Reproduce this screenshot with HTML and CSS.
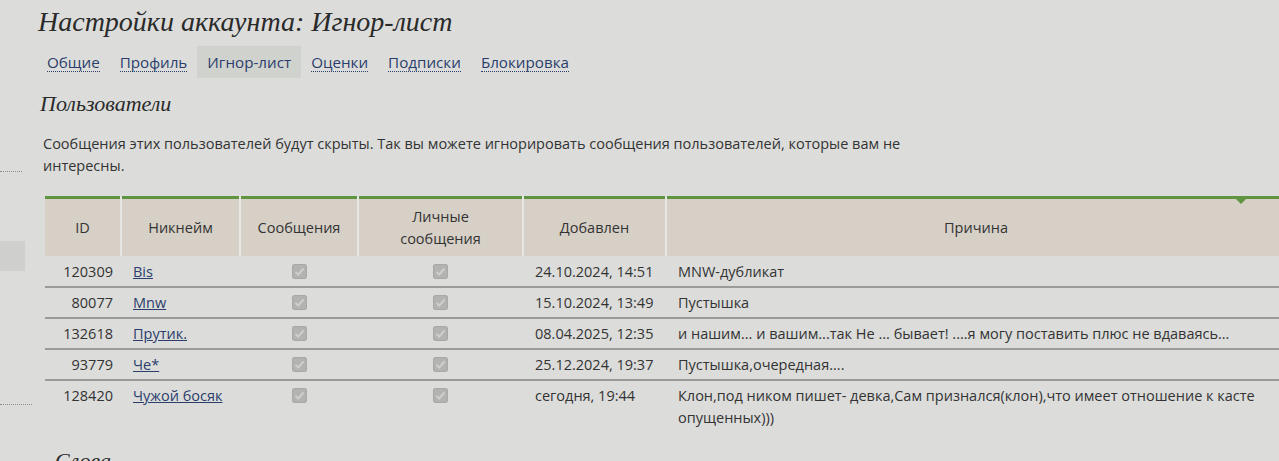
FILE: index.html
```html
<!DOCTYPE html>
<html lang="ru">
<head>
<meta charset="utf-8">
<title>Настройки аккаунта: Игнор-лист</title>
<link rel="stylesheet" href="styles.css">
</head>
<body>
<div class="layout">
  <aside class="side">
    <div class="side-dots first"></div>
    <div class="side-box"></div>
    <div class="side-dots second"></div>
  </aside>
  <main class="main">
    <h1 class="title">Настройки аккаунта: Игнор-лист</h1>
    <nav class="tabs">
      <a class="tab" href="#">Общие</a>
      <a class="tab" href="#">Профиль</a>
      <span class="tab active">Игнор-лист</span>
      <a class="tab" href="#">Оценки</a>
      <a class="tab" href="#">Подписки</a>
      <a class="tab" href="#">Блокировка</a>
    </nav>
    <h2 class="section">Пользователи</h2>
    <p class="desc">Сообщения этих пользователей будут скрыты. Так вы можете игнорировать сообщения пользователей, которые вам не интересны.</p>
    <table class="list">
      <colgroup>
        <col class="c-id"><col class="c-nick"><col class="c-msg"><col class="c-pm"><col class="c-date"><col class="c-reason">
      </colgroup>
      <thead>
        <tr>
          <th>ID</th>
          <th>Никнейм</th>
          <th>Сообщения</th>
          <th>Личные<br>сообщения</th>
          <th>Добавлен</th>
          <th class="sorted">Причина</th>
        </tr>
      </thead>
      <tbody>
        <tr>
          <td class="id">120309</td>
          <td><a href="#">Bis</a></td>
          <td class="chk"><svg class="cb" viewBox="0 0 14 14"><rect x="0.5" y="0.5" width="13" height="13" rx="2"/><path d="M3.2 7.3 L5.8 9.8 L10.8 4.2"/></svg></td>
          <td class="chk"><svg class="cb" viewBox="0 0 14 14"><rect x="0.5" y="0.5" width="13" height="13" rx="2"/><path d="M3.2 7.3 L5.8 9.8 L10.8 4.2"/></svg></td>
          <td>24.10.2024, 14:51</td>
          <td class="reason">MNW-дубликат</td>
        </tr>
        <tr>
          <td class="id">80077</td>
          <td><a href="#">Mnw</a></td>
          <td class="chk"><svg class="cb" viewBox="0 0 14 14"><rect x="0.5" y="0.5" width="13" height="13" rx="2"/><path d="M3.2 7.3 L5.8 9.8 L10.8 4.2"/></svg></td>
          <td class="chk"><svg class="cb" viewBox="0 0 14 14"><rect x="0.5" y="0.5" width="13" height="13" rx="2"/><path d="M3.2 7.3 L5.8 9.8 L10.8 4.2"/></svg></td>
          <td>15.10.2024, 13:49</td>
          <td class="reason">Пустышка</td>
        </tr>
        <tr>
          <td class="id">132618</td>
          <td><a href="#">Прутик.</a></td>
          <td class="chk"><svg class="cb" viewBox="0 0 14 14"><rect x="0.5" y="0.5" width="13" height="13" rx="2"/><path d="M3.2 7.3 L5.8 9.8 L10.8 4.2"/></svg></td>
          <td class="chk"><svg class="cb" viewBox="0 0 14 14"><rect x="0.5" y="0.5" width="13" height="13" rx="2"/><path d="M3.2 7.3 L5.8 9.8 L10.8 4.2"/></svg></td>
          <td>08.04.2025, 12:35</td>
          <td class="reason">и нашим... и вашим...так Не ... бывает! ....я могу поставить плюс не вдаваясь...</td>
        </tr>
        <tr>
          <td class="id">93779</td>
          <td><a href="#">Че*</a></td>
          <td class="chk"><svg class="cb" viewBox="0 0 14 14"><rect x="0.5" y="0.5" width="13" height="13" rx="2"/><path d="M3.2 7.3 L5.8 9.8 L10.8 4.2"/></svg></td>
          <td class="chk"><svg class="cb" viewBox="0 0 14 14"><rect x="0.5" y="0.5" width="13" height="13" rx="2"/><path d="M3.2 7.3 L5.8 9.8 L10.8 4.2"/></svg></td>
          <td>25.12.2024, 19:37</td>
          <td class="reason">Пустышка,очередная....</td>
        </tr>
        <tr>
          <td class="id">128420</td>
          <td><a href="#">Чужой босяк</a></td>
          <td class="chk"><svg class="cb" viewBox="0 0 14 14"><rect x="0.5" y="0.5" width="13" height="13" rx="2"/><path d="M3.2 7.3 L5.8 9.8 L10.8 4.2"/></svg></td>
          <td class="chk"><svg class="cb" viewBox="0 0 14 14"><rect x="0.5" y="0.5" width="13" height="13" rx="2"/><path d="M3.2 7.3 L5.8 9.8 L10.8 4.2"/></svg></td>
          <td>сегодня, 19:44</td>
          <td class="reason">Клон,под ником пишет- девка,Сам признался(клон),что имеет отношение к касте опущенных)))</td>
        </tr>
      </tbody>
    </table>
    <h2 class="section next">Слова</h2>
  </main>
</div>
</body>
</html>
```

FILE: styles.css
```css
html, body {
  margin: 0;
  padding: 0;
  background: #dcdddb;
  overflow: hidden;
}
body {
  font-family: "Open Sans", "Liberation Sans", sans-serif;
  font-size: 14.5px;
  color: #333;
}
.layout {
  display: grid;
  grid-template-columns: 38px 1fr;
}
.side {
  display: flex;
  flex-direction: column;
}
.side-dots {
  border-top: 1px dotted #8c8c8c;
}
.side-dots.first {
  width: 22px;
  margin-top: 171px;
}
.side-box {
  width: 25px;
  height: 30px;
  margin-top: 69px;
  background: #cfd0ce;
}
.side-dots.second {
  width: 32px;
  margin-top: 133px;
}
.main {
  min-width: 0;
}
.title {
  margin: 5px 0 0;
  font-family: "Liberation Serif", serif;
  font-style: italic;
  font-weight: normal;
  font-size: 28px;
  line-height: 33px;
  color: #2a2a2a;
}
.tabs {
  display: flex;
  align-items: center;
  margin: 8px 0 0 0;
  height: 32px;
}
.tab {
  color: #2b3d6b;
  text-decoration: none;
  border-bottom: 1px dotted #2b3d6b;
  line-height: 18px;
  margin: 0 10px;
  font-size: 15.2px;
}
.tab:first-child {
  margin-left: 9px;
}
.tab.active {
  border-bottom: none;
  background: #d0d2ce;
  padding: 7px 10px;
  margin: 0;
}
.section {
  margin: 12px 0 0 2px;
  font-family: "Liberation Serif", serif;
  font-style: italic;
  font-weight: normal;
  font-size: 22px;
  line-height: 28px;
  color: #2a2a2a;
}
.desc {
  margin: 15px 0 0 5px;
  width: 900px;
  line-height: 22px;
}
.list {
  margin: 19px 0 0 7px;
  width: 1240px;
  border-collapse: collapse;
  table-layout: fixed;
}
.c-id { width: 76px; }
.c-nick { width: 119px; }
.c-msg { width: 118px; }
.c-pm { width: 165px; }
.c-date { width: 143px; }
.list th {
  background: linear-gradient(#5f9440, #5f9440) top / 100% 3px no-repeat, #d6d0c7;
  border-left: 2px solid #e6e6e3;
  font-weight: normal;
  line-height: 22px;
  height: 57px;
  padding: 3px 6px 0;
  text-align: center;
  color: #333;
}
.list th:first-child {
  border-left: none;
}
.list th.sorted {
  position: relative;
}
.list th.sorted::after {
  content: "";
  position: absolute;
  top: 2px;
  right: 38px;
  width: 0;
  height: 0;
  border-left: 6px solid transparent;
  border-right: 6px solid transparent;
  border-top: 6px solid #5f9440;
}
.list td {
  padding: 4px 12px 3px;
  line-height: 22px;
  vertical-align: top;
  border-top: 2px solid #9a9b99;
}
.list tbody tr:first-child td {
  border-top: none;
  padding-top: 5px;
}
.list td.id {
  text-align: right;
  padding-right: 8px;
}
.list td.reason {
  padding-right: 18px;
}
.list td a {
  color: #2b3d6b;
  text-decoration: underline;
}
.list td.chk {
  text-align: center;
}
.cb {
  width: 15px;
  height: 15px;
  vertical-align: -2px;
}
.cb rect {
  fill: #b3b4b2;
  stroke: #a8a9a7;
  stroke-width: 1;
}
.cb path {
  fill: none;
  stroke: #cfd0ce;
  stroke-width: 1.8;
}
.section.next {
  margin-top: 15px;
  margin-left: 17px;
}
```
